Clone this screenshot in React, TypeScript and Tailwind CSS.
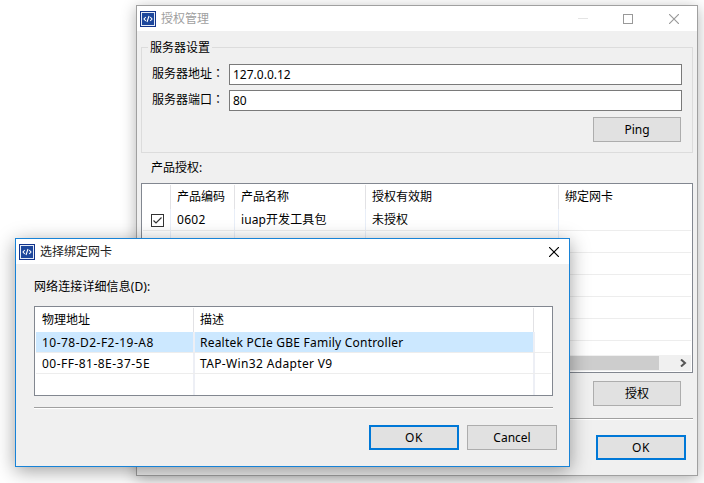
import type { ReactNode } from "react";

function AppIcon() {
  return (
    <svg width="16" height="16" viewBox="0 0 16 16" className="block shrink-0">
      <rect width="16" height="16" fill="#12348c" />
      <rect x="1.5" y="1.5" width="13" height="13" fill="#1d479c" stroke="#e4ebf7" strokeWidth="1" />
      <path d="M5.8 6 4 8l1.8 2M10.2 6 12 8l-1.8 2M9 5 7 11" fill="none" stroke="#fff" strokeWidth="1.1" />
    </svg>
  );
}

function CloseGlyph({ color }: { color: string }) {
  return (
    <svg width="10" height="10" viewBox="0 0 10 10" className="block shrink-0">
      <path d="M0 0l10 10M10 0L0 10" stroke={color} strokeWidth="1.15" fill="none" />
    </svg>
  );
}

function Button({ children, className = "", primary = false }: { children: ReactNode; className?: string; primary?: boolean }) {
  return (
    <button
      className={`flex h-[25px] shrink-0 items-center justify-center bg-[#e1e1e1] ${
        primary ? "border-2 border-[#0078d7]" : "border border-[#adadad]"
      } ${className}`}
    >
      {children}
    </button>
  );
}

function Field({ label, value }: { label: string; value: string }) {
  return (
    <div className="flex h-[21px] items-center">
      <span className="w-[77px] shrink-0 pb-[3px]">
        {label}
        <span className="font-['Noto_Sans_CJK_TC',sans-serif]">：</span>
      </span>
      <div className="flex h-[21px] w-[453px] shrink-0 items-center border border-[#7a7a7a] bg-white px-[3px]">{value}</div>
    </div>
  );
}

const licenseColumns = ["w-[28px]", "w-[64px]", "w-[131px]", "w-[193px]", "grow"];

function LicenseRow({ cells, header = false }: { cells: ReactNode[]; header?: boolean }) {
  return (
    <div className={`flex shrink-0 ${header ? "h-[24px]" : "h-[22px] border-b border-[#ededed]"}`}>
      {cells.map((cell, i) => (
        <div
          key={i}
          className={`flex shrink-0 items-center ${i === 0 ? "pl-2" : "pl-[6px]"} ${licenseColumns[i]} ${
            i === 4 ? "" : header ? "border-r border-[#e2e2e5]" : "border-r border-[#e8eef8]"
          }`}
        >
          {cell}
        </div>
      ))}
    </div>
  );
}

function LicenseWindow() {
  const check = (
    <svg width="13" height="13" viewBox="0 0 13 13" className="mt-px block">
      <rect x=".5" y=".5" width="12" height="12" fill="#fff" stroke="#333" />
      <path d="M2.5 6.5 5 9l5.5-5.5" fill="none" stroke="#333" strokeWidth="1.2" />
    </svg>
  );
  return (
    <section className="absolute left-[136px] top-[5px] flex h-[471px] w-[562px] flex-col border border-[#a0a0a0] bg-[#f0f0f0] shadow-[0_3px_14px_rgba(0,0,0,0.3)]">
      <header className="flex h-[25px] shrink-0 items-center bg-white pl-[3px] text-[#a0a0a0]">
        <AppIcon />
        <span className="ml-[5px] grow">授权管理</span>
        <div className="mr-[35px] h-px w-[10px] bg-[#e4e4e4]" />
        <div className="mr-[36px] size-[10px] border border-[#999]" />
        <div className="mr-[18px]">
          <CloseGlyph color="#999" />
        </div>
      </header>
      <div className="flex grow flex-col px-1 pt-[7px]">
        <div className="h-[115px] w-[552px] shrink-0">
          <div className="flex h-[18px] items-end">
            <div className="h-[9px] w-[7px] border-l border-t border-[#dcdcdc]" />
            <span className="w-[64px] self-center pl-[2px] pt-px">服务器设置</span>
            <div className="h-[9px] grow border-r border-t border-[#dcdcdc]" />
          </div>
          <div className="flex h-[97px] flex-col gap-[5px] border-x border-b border-[#dcdcdc] px-[10px] pt-[8px]">
            <Field label="服务器地址" value="127.0.0.12" />
            <Field label="服务器端口" value="80" />
            <Button className="mr-px mt-px w-[88px] self-end">Ping</Button>
          </div>
        </div>
        <span className="flex h-[30px] shrink-0 items-center pl-[10px]">产品授权:</span>
        <div className="flex h-[190px] w-[552px] shrink-0 flex-col border border-[#828790] bg-white p-px">
          <LicenseRow header cells={["", "产品编码", "产品名称", "授权有效期", "绑定网卡"]} />
          <LicenseRow
            cells={[check, <span className="tracking-[0.3px]">0602</span>, <span className="tracking-[0.1px]">iuap开发工具包</span>, "未授权", ""]}
          />
          {[0, 1, 2, 3, 4].map((row) => (
            <LicenseRow key={row} cells={["", "", "", "", ""]} />
          ))}
          <div className="mt-auto flex h-[16px] bg-[#f0f0f0]">
            <div className="my-px ml-[17px] w-[499px] bg-[#cdcdcd]" />
            <svg width="8" height="8" viewBox="0 0 8 8" className="ml-[21px] mt-[4px] block">
              <path d="M1 .5 5 4 1 7.5" fill="none" stroke="#555" strokeWidth="2" />
            </svg>
          </div>
        </div>
        <Button className="mr-[12px] mt-2 w-[88px] self-end">授权</Button>
        <div className="mt-[12px] h-[2px] w-[552px] shrink-0 border-b border-t border-b-white border-t-[#a0a0a0]" />
        <Button primary className="mr-[7px] mt-[15px] w-[90px] self-end tracking-[0.5px]">
          OK
        </Button>
      </div>
    </section>
  );
}

function AdapterRow({ address, name, variant }: { address: string; name: string; variant: "header" | "selected" | "plain" | "last" }) {
  const height = variant === "header" ? "h-[24px]" : "h-[21px]";
  const line = variant === "header" || variant === "last" ? "" : "border-b border-[#ededed]";
  const column = variant === "header" ? "border-r border-[#e2e2e5]" : "border-r-2 border-[#edeff5]";
  const fill = variant === "selected" ? "bg-[#cce8ff]" : "";
  const nudge = variant === "plain" || variant === "selected" ? "pt-px" : "";
  const nameTracking = variant === "plain" ? "tracking-[0.35px]" : variant === "selected" ? "tracking-[0.22px]" : "";
  return (
    <div className={`flex shrink-0 items-center ${height} ${line}`}>
      <div
        className={`flex h-full items-center pl-[6px] ${nudge} ${
          variant === "header" ? "mr-px w-[158px]" : "w-[159px] tracking-[0.47px]"
        } ${column} ${fill}`}
      >
        {address}
      </div>
      <div className={`flex h-full items-center pl-[5px] ${nudge} ${nameTracking} ${variant === "header" ? "w-[339px]" : "w-[340px]"} ${column} ${fill}`}>
        {name}
      </div>
    </div>
  );
}

function AdapterDialog() {
  return (
    <section className="absolute left-[15px] top-[238px] flex h-[229px] w-[555px] flex-col border border-[#1883d7] bg-[#f0f0f0] shadow-[0_4px_18px_rgba(0,0,0,0.38)]">
      <header className="flex h-[25px] shrink-0 items-center bg-white pl-[3px] pr-[10px] text-[#222]">
        <AppIcon />
        <span className="ml-[5px] grow">选择绑定网卡</span>
        <CloseGlyph color="#000" />
      </header>
      <div className="flex grow flex-col pl-[18px] pr-[12px]">
        <span className="flex h-[42px] shrink-0 items-center pt-[3px] tracking-[0.1px]">网络连接详细信息(D):</span>
        <div className="flex h-[90px] w-[519px] shrink-0 flex-col border border-[#828790] bg-white p-px">
          <AdapterRow variant="header" address="物理地址" name="描述" />
          <AdapterRow variant="selected" address="10-78-D2-F2-19-A8" name="Realtek PCIe GBE Family Controller" />
          <AdapterRow variant="plain" address="00-FF-81-8E-37-5E" name="TAP-Win32 Adapter V9" />
          <AdapterRow variant="last" address="" name="" />
        </div>
        <div className="mt-[11px] h-[2px] w-[519px] shrink-0 border-b border-t border-b-white border-t-[#a0a0a0]" />
        <div className="mt-[16px] flex justify-end gap-2">
          <Button primary className="w-[90px] tracking-[0.5px]">
            OK
          </Button>
          <Button className="w-[90px]">Cancel</Button>
        </div>
      </div>
    </section>
  );
}

export default function App() {
  return (
    <main className="relative h-[483px] w-[704px] overflow-hidden whitespace-nowrap bg-white font-['Noto_Sans','Noto_Sans_CJK_SC',sans-serif] text-[12px] leading-[16px] text-black">
      <LicenseWindow />
      <AdapterDialog />
    </main>
  );
}
